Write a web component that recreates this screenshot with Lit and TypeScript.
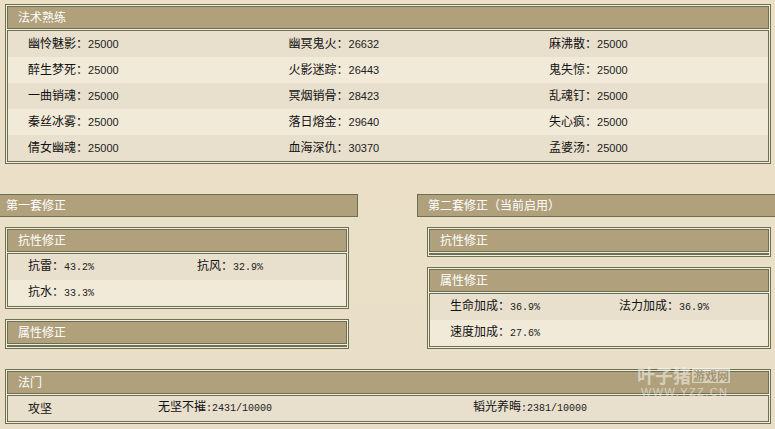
import { LitElement, html, css } from "lit";
import { customElement } from "lit/decorators.js";

type Cell = [string, string];

const skills: Cell[][] = [
  [["幽怜魅影", "25000"], ["幽冥鬼火", "26632"], ["麻沸散", "25000"]],
  [["醉生梦死", "25000"], ["火影迷踪", "26443"], ["鬼失惊", "25000"]],
  [["一曲销魂", "25000"], ["冥烟销骨", "28423"], ["乱魂钉", "25000"]],
  [["秦丝冰雾", "25000"], ["落日熔金", "29640"], ["失心疯", "25000"]],
  [["倩女幽魂", "25000"], ["血海深仇", "30370"], ["孟婆汤", "25000"]],
];

@customElement("app-root")
export class AppRoot extends LitElement {
  static styles = css`
    :host {
      display: block;
      width: 775px;
      height: 429px;
      overflow: hidden;
      position: relative;
      background: linear-gradient(#ebe0c6, #e9dfc8);
      font: 12px/14px "Noto Sans CJK SC", sans-serif;
      color: #111;
    }
    .page { display: flex; flex-direction: column; padding-top: 4px; }
    .box {
      border: 1px solid #6c7052;
      padding: 1px;
      background: #f2ecdc;
    }
    .head {
      height: 21px;
      line-height: 19px;
      border: 1px solid #6c7052;
      background: #b0a17c;
      color: #fff;
      padding-left: 10px;
    }
    .body {
      margin-top: 1px;
      border: 1px solid #6c7052;
    }
    .row {
      display: grid;
      box-sizing: border-box;
      height: 26px;
      align-items: center;
      padding: 0 0 2px 20px;
    }
    .row:nth-child(odd) { background: #e8dfcd; }
    .row:nth-child(even) { background: #f1ead9; }
    .three { grid-template-columns: 260.5px 260.5px 1fr; }
    .two { grid-template-columns: 169px 1fr; }
    .short { height: 25px; grid-template-columns: 130px 315px 1fr; }
    .num { font: 10px/14px "Liberation Mono", monospace; color: #222; }
    .sans { font: 11px/14px "Liberation Sans", sans-serif; color: #222; }
    .top { margin: 0 4px 0 5px; }
    .columns {
      display: grid;
      grid-template-columns: 358px 358px;
      justify-content: space-between;
      margin-top: 30px;
    }
    .bar {
      height: 21px;
      line-height: 19px;
      border: 1px solid #6c7052;
      border-width: 1px 1px 1px 0;
      background: #b0a17c;
      color: #fff;
      padding-left: 6px;
    }
    .right .bar { border-width: 1px 0 1px 1px; padding-left: 10px; }
    .stack { display: flex; flex-direction: column; gap: 10px; margin: 10px 9px 0 5px; }
    .right .stack { margin: 10px 4px 0 10px; }
    .empty { height: 0; }
    .bottom { margin: 20px 4px 0 5px; }
    .mark {
      position: absolute;
      left: 637px;
      top: 364px;
      color: rgba(255, 255, 255, 0.5);
      display: grid;
      grid-template-columns: auto auto;
      justify-content: start;
      align-items: center;
      column-gap: 1px;
    }
    .mark b { font: 700 18px/23px "Noto Sans CJK SC", sans-serif; }
    .mark i {
      font: normal 700 12px/15px "Noto Sans CJK SC", sans-serif;
      background: rgba(255, 255, 255, 0.5);
      color: #a49670;
      padding: 0 1px;
    }
    .mark span {
      grid-column: 1 / 3;
      font: 11px/11px "Liberation Sans", sans-serif;
      letter-spacing: 1.4px;
      margin: 0 0 0 4px;
    }
  `;

  private cell(c: Cell, cls = "num") {
    return html`<div>${c[0]}：<span class=${cls}>${c[1]}</span></div>`;
  }

  render() {
    return html`
      <div class="page">
        <div class="box top">
          <div class="head">法术熟练</div>
          <div class="body">
            ${skills.map((r) => html`<div class="row three">${r.map((c) => this.cell(c, "sans"))}</div>`)}
          </div>
        </div>
        <div class="columns">
          <div class="left">
            <div class="bar">第一套修正</div>
            <div class="stack">
              <div class="box">
                <div class="head">抗性修正</div>
                <div class="body">
                  <div class="row two">${this.cell(["抗雷", "43.2%"])}${this.cell(["抗风", "32.9%"])}</div>
                  <div class="row two">${this.cell(["抗水", "33.3%"])}</div>
                </div>
              </div>
              <div class="box">
                <div class="head">属性修正</div>
                <div class="body empty"></div>
              </div>
            </div>
          </div>
          <div class="right">
            <div class="bar">第二套修正（当前启用）</div>
            <div class="stack">
              <div class="box">
                <div class="head">抗性修正</div>
                <div class="body empty"></div>
              </div>
              <div class="box">
                <div class="head">属性修正</div>
                <div class="body">
                  <div class="row two">${this.cell(["生命加成", "36.9%"])}${this.cell(["法力加成", "36.9%"])}</div>
                  <div class="row two">${this.cell(["速度加成", "27.6%"])}</div>
                </div>
              </div>
            </div>
          </div>
        </div>
        <div class="box bottom">
          <div class="head">法门</div>
          <div class="body">
            <div class="row short">
              <div>攻坚</div>
              <div>无坚不摧<span class="num">:2431/10000</span></div>
              <div>韬光养晦<span class="num">:2381/10000</span></div>
            </div>
          </div>
        </div>
      </div>
      <div class="mark"><b>叶子猪</b><i>游戏网</i><span>WWW.YZZ.CN</span></div>
    `;
  }
}
